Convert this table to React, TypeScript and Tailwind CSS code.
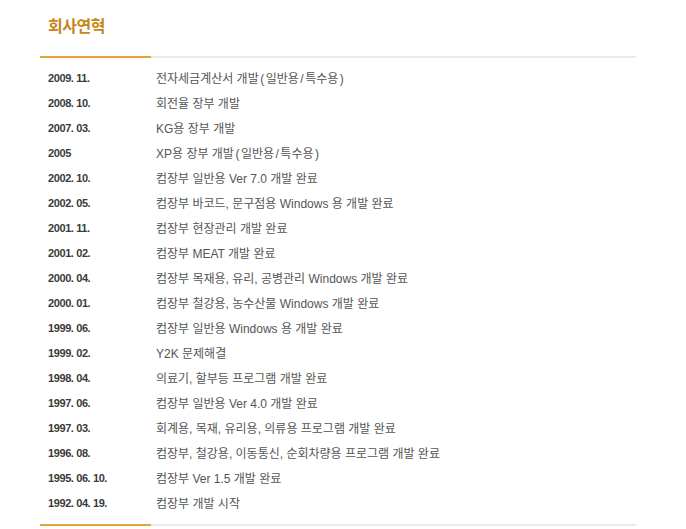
import React from "react";

const rows: [string, string][] = [
  ["2009. 11.", "전자세금계산서 개발(일반용/특수용)"],
  ["2008. 10.", "회전율 장부 개발"],
  ["2007. 03.", "KG용 장부 개발"],
  ["2005", "XP용 장부 개발(일반용/특수용)"],
  ["2002. 10.", "컴장부 일반용 Ver 7.0 개발 완료"],
  ["2002. 05.", "컴장부 바코드, 문구점용 Windows 용 개발 완료"],
  ["2001. 11.", "컴장부 현장관리 개발 완료"],
  ["2001. 02.", "컴장부 MEAT 개발 완료"],
  ["2000. 04.", "컴장부 목재용, 유리, 공병관리 Windows 개발 완료"],
  ["2000. 01.", "컴장부 철강용, 농수산물 Windows 개발 완료"],
  ["1999. 06.", "컴장부 일반용 Windows 용 개발 완료"],
  ["1999. 02.", "Y2K 문제해결"],
  ["1998. 04.", "의료기, 할부등 프로그램 개발 완료"],
  ["1997. 06.", "컴장부 일반용 Ver 4.0 개발 완료"],
  ["1997. 03.", "회계용, 목재, 유리용, 의류용 프로그램 개발 완료"],
  ["1996. 08.", "컴장부, 철강용, 이동통신, 순회차량용 프로그램 개발 완료"],
  ["1995. 06. 10.", "컴장부 Ver 1.5 개발 완료"],
  ["1992. 04. 19.", "컴장부 개발 시작"],
];

function Divider() {
  return (
    <div className="flex h-[2px] w-[596px]">
      <div className="w-[111px] bg-[#e3a33a]" />
      <div className="flex-1 bg-[#ebebeb]" />
    </div>
  );
}

function Mixed({ text }: { text: string }) {
  const parts = text.split(/([()/])/);
  return (
    <>
      {parts.map((p, i) =>
        /^[()/]$/.test(p) ? (
          <span key={i} className="mx-[1.5px]">
            {p}
          </span>
        ) : (
          <span key={i}>{p}</span>
        )
      )}
    </>
  );
}

export default function App() {
  return (
    <div className="w-[686px] h-[529px] bg-white pl-[40px] font-['Liberation_Sans','Noto_Sans_CJK_KR',sans-serif]">
      <div className="pt-[14px] pl-[8px] h-[56px]">
        <h1 className="font-['Noto_Sans_CJK_KR',sans-serif] text-[16px] font-bold leading-[22px] text-[#c8861a] tracking-[-0.5px]">
          회사연혁
        </h1>
      </div>
      <Divider />
      <div className="pt-[8px] pb-[8px]">
        {rows.map(([d, t]) => (
          <div key={d} className="flex h-[25px] items-center pl-[8px]">
            <div className="w-[108px] text-[11px] font-bold text-[#3a3a3a] tracking-[-0.4px]">
              {d}
            </div>
            <div className="text-[12px] text-[#555] whitespace-pre">
              <Mixed text={t} />
            </div>
          </div>
        ))}
      </div>
      <Divider />
    </div>
  );
}
